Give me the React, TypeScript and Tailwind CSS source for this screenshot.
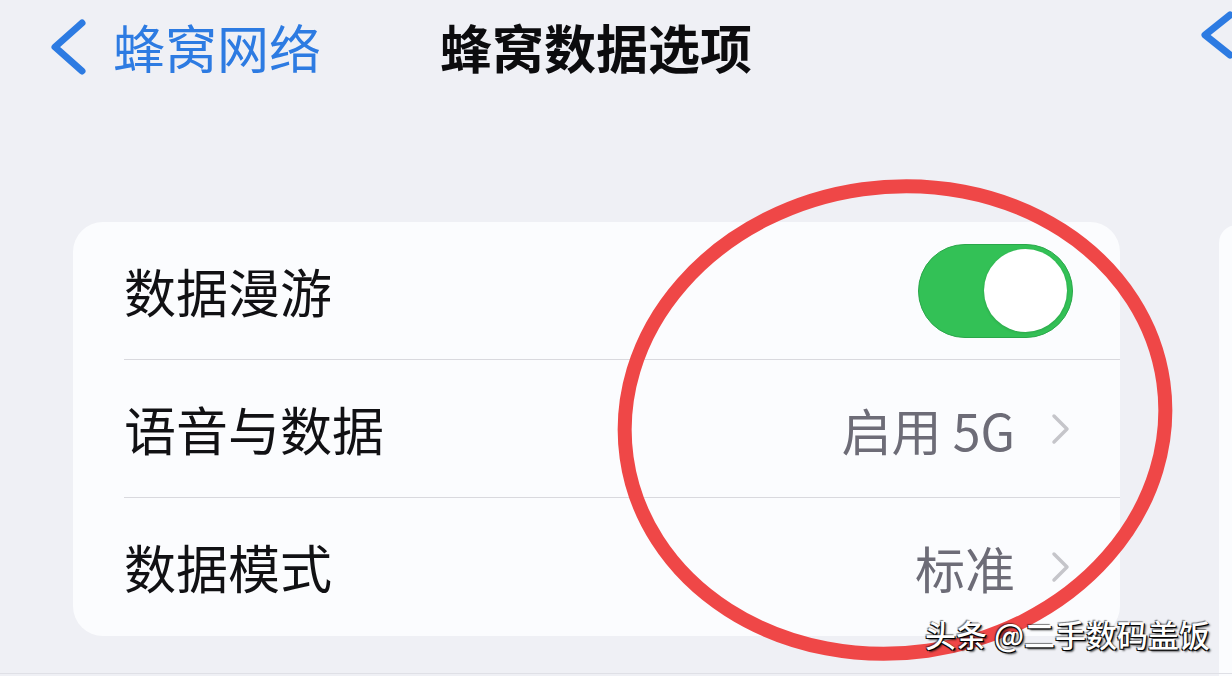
import React from "react";

const font = { fontFamily: '"Noto Sans CJK SC", "Noto Sans", sans-serif' };

function Chevron() {
  return (
    <svg width="24" height="34" viewBox="0 0 24 34" className="shrink-0">
      <path d="M5 4 L18 17 L5 30" fill="none" stroke="#c5c5ca" strokeWidth="3.5" strokeLinecap="round" strokeLinejoin="round" />
    </svg>
  );
}

function Row({ label, children, last }: { label: string; children: React.ReactNode; last?: boolean }) {
  return (
    <div className="pl-[51px] flex-1 flex">
      <div className={`flex-1 flex items-center justify-between pr-[47px] ${last ? "" : "border-b border-[#d9d9de]"}`}>
        <span className="text-[52px] leading-none text-[#111114]">{label}</span>
        {children}
      </div>
    </div>
  );
}

export default function App() {
  return (
    <div className="relative w-[1232px] h-[676px] overflow-hidden bg-[#eff0f5] flex" style={font}>
      <div className="w-[1200px] shrink-0 flex flex-col">
        <header className="h-[94px] flex items-center">
          <svg width="40" height="60" viewBox="0 0 40 60" className="ml-[48px] shrink-0">
            <path d="M34 6 L7 30 L34 54" fill="none" stroke="#2d7be2" strokeWidth="7" strokeLinecap="round" strokeLinejoin="round" />
          </svg>
          <span className="ml-[25px] text-[52px] leading-none text-[#2d7be2]">蜂窝网络</span>
          <span className="ml-[119px] text-[52px] leading-none font-bold text-[#0c0c0e]">蜂窝数据选项</span>
        </header>
        <div className="mt-[128px] ml-[73px] w-[1047px] h-[414px] rounded-[30px] bg-[#fbfcfe] flex flex-col">
          <Row label="数据漫游">
            <div className="w-[155px] h-[94px] rounded-full bg-[#33c156] border border-[#2aa74a] flex items-center justify-end pr-[5px]">
              <div className="w-[83px] h-[83px] rounded-full bg-white shadow-[0_1px_3px_rgba(0,0,0,0.15)]" />
            </div>
          </Row>
          <Row label="语音与数据">
            <div className="flex items-center gap-[34px]">
              <span className="text-[50px] leading-none text-[#6d6c77]">启用 5G</span>
              <Chevron />
            </div>
          </Row>
          <Row label="数据模式" last>
            <div className="flex items-center gap-[34px]">
              <span className="text-[50px] leading-none text-[#6d6c77]">标准</span>
              <Chevron />
            </div>
          </Row>
        </div>
      </div>
      <div className="flex-1 flex flex-col">
        <svg width="40" height="50" viewBox="0 0 40 50" className="mt-[10px] shrink-0">
          <path d="M30 5 L5 25 L30 45" fill="none" stroke="#2d7be2" strokeWidth="7" strokeLinecap="round" strokeLinejoin="round" />
        </svg>
        <div className="mt-[165px] ml-[19px] flex-1 rounded-tl-[18px] bg-[#fbfcfe]" />
      </div>
      <svg className="absolute inset-0 pointer-events-none" width="1232" height="676" viewBox="0 0 1232 676">
        <ellipse cx="895" cy="420" rx="271" ry="233" transform="rotate(-8 895 420)" fill="none" stroke="#ef4747" strokeWidth="14" />
      </svg>
      <div className="absolute left-[925px] top-[618px] text-[31px] leading-none font-medium text-white [text-shadow:1px_1px_0_#000,-1px_1px_0_#111,2px_2px_2px_rgba(0,0,0,0.7),-1px_-1px_1px_rgba(0,0,0,0.5)]">
        头条 @二手数码盖饭
      </div>
      <div className="absolute left-0 right-0 bottom-[2px] h-px bg-[#dfe0e6]" />
    </div>
  );
}
